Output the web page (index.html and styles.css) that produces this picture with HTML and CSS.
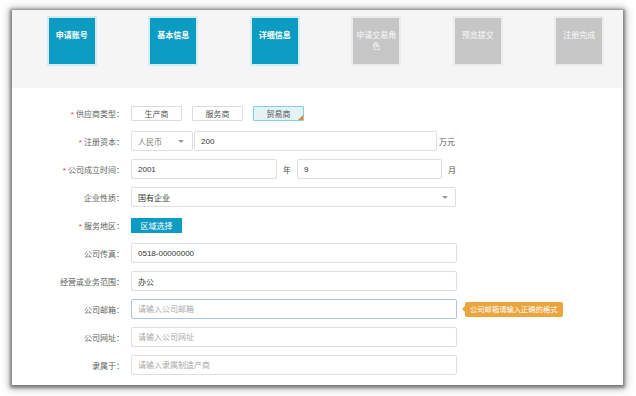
FILE: index.html
```html
<!DOCTYPE html>
<html>

<head>
    <title>注册 - 详细信息</title>
    <meta charset="utf-8">
    <meta name="viewport" content="width=device-width, initial-scale=1.0">
    <link rel="stylesheet" href="styles.css">
</head>

<body>
    <div class="panel">
        <nav class="steps">
            <div class="step"><div class="box done">申请账号</div></div>
            <div class="step"><div class="box done">基本信息</div></div>
            <div class="step"><div class="box done">详细信息</div></div>
            <div class="step"><div class="box">申请交易角色</div></div>
            <div class="step"><div class="box">预览提交</div></div>
            <div class="step"><div class="box">注册完成</div></div>
        </nav>

        <form class="form">
            <div class="row">
                <label class="lbl"><span class="req">*</span> 供应商类型：</label>
                <div class="field">
                    <button type="button" class="type">生产商</button>
                    <button type="button" class="type">服务商</button>
                    <button type="button" class="type valgt">贸易商</button>
                </div>
            </div>
            <div class="row">
                <label class="lbl"><span class="req">*</span> 注册资本：</label>
                <div class="field">
                    <div class="select small grey">人民币<span class="arrow"></span></div>
                    <input class="input money" type="text" value="200">
                    <span class="unit">万元</span>
                </div>
            </div>
            <div class="row">
                <label class="lbl"><span class="req">*</span> 公司成立时间：</label>
                <div class="field">
                    <input class="input year" type="text" value="2001">
                    <span class="unit wide">年</span>
                    <input class="input month" type="text" value="9">
                    <span class="unit wide">月</span>
                </div>
            </div>
            <div class="row">
                <label class="lbl">企业性质：</label>
                <div class="field">
                    <div class="select big">国有企业<span class="arrow"></span></div>
                </div>
            </div>
            <div class="row">
                <label class="lbl"><span class="req">*</span> 服务地区：</label>
                <div class="field">
                    <button type="button" class="area">区域选择</button>
                </div>
            </div>
            <div class="row">
                <label class="lbl">公司传真：</label>
                <div class="field"><input class="input full" type="text" value="0518-00000000"></div>
            </div>
            <div class="row">
                <label class="lbl">经营或业务范围：</label>
                <div class="field"><input class="input full" type="text" value="办公"></div>
            </div>
            <div class="row">
                <label class="lbl">公司邮箱：</label>
                <div class="field">
                    <input class="input full fokus" type="text" placeholder="请输入公司邮箱">
                    <span class="tip">公司邮箱请输入正确的格式</span>
                </div>
            </div>
            <div class="row">
                <label class="lbl">公司网址：</label>
                <div class="field"><input class="input full" type="text" placeholder="请输入公司网址"></div>
            </div>
            <div class="row">
                <label class="lbl">隶属于：</label>
                <div class="field"><input class="input full" type="text" placeholder="请输入隶属制造产商"></div>
            </div>
        </form>
    </div>
</body></html>
```

FILE: styles.css
```css
body {
    margin: 0;
    padding: 10px 13px 11px 12px;
    background: white;
    font-family: "Liberation Sans", "Noto Sans CJK SC", sans-serif;
}

.panel {
    height: 375px;
    background: white;
    overflow: hidden;
    box-shadow: 0 1px 3px 2px rgba(0, 0, 0, .4), 0 1px 8px 3px rgba(0, 0, 0, .25);
}

/* steps */

.steps {
    display: flex;
    height: 78px;
    box-sizing: border-box;
    padding: 6px 0 0 9px;
    background-color: #f5f5f5;
}

.step {
    flex: 0 0 101.5px;
    display: flex;
    justify-content: center;
}

.box {
    width: 42px;
    height: 34px;
    padding: 12px 2px 0;
    border: 2px solid #ececec;
    background-color: #c6c6c6;
    color: #fafafa;
    font-size: 8px;
    line-height: 11px;
    text-align: center;
}

.box.done {
    background-color: #0c9cc3;
    border-color: #d3ebf3;
    color: white;
    font-weight: bold;
}

/* form */

.form {
    padding-top: 11px;
}

.row {
    display: flex;
    align-items: center;
    height: 28px;
}

.lbl {
    flex: 0 0 112px;
    margin-right: 7px;
    text-align: right;
    font-size: 8px;
    color: #606060;
}

.req {
    color: #e4393c;
}

.field {
    display: flex;
    align-items: center;
}

.type {
    width: 51px;
    height: 15px;
    margin-right: 10px;
    padding: 0;
    border: 1px solid #dcdcdc;
    border-radius: 1px;
    background-color: white;
    color: #555;
    font-family: inherit;
    font-size: 8px;
}

.type.valgt {
    position: relative;
    background-color: #e4f1f5;
    border-color: #86cde2;
}

.type.valgt::after {
    content: "";
    position: absolute;
    right: 0;
    bottom: 0;
    border-bottom: 5px solid #e8832f;
    border-left: 5px solid transparent;
}

.area {
    width: 51px;
    height: 15px;
    padding: 0;
    border: none;
    background-color: #0c9cc3;
    color: white;
    font-family: inherit;
    font-size: 8px;
}

.input {
    height: 20px;
    box-sizing: border-box;
    padding: 0 6px;
    border: 1px solid #dedede;
    border-radius: 2px;
    color: #333;
    font-family: inherit;
    font-size: 8px;
    outline: none;
}

.input::placeholder {
    color: #aaa;
}

.input.fokus {
    border-color: #a9c5ef;
}

.money {
    width: 243px;
    margin-left: 1px;
}

.year {
    width: 146px;
}

.month {
    width: 145px;
}

.full {
    width: 326px;
}

.unit {
    margin-left: 2px;
    font-size: 8px;
    color: #555;
}

.unit.wide {
    margin: 0 6px;
}

.select {
    display: flex;
    justify-content: space-between;
    align-items: center;
    height: 20px;
    box-sizing: border-box;
    padding: 0 7px 0 6px;
    border: 1px solid #dedede;
    border-radius: 2px;
    font-size: 8px;
    color: #333;
}

.select.small {
    width: 62px;
    padding-right: 8px;
}

.select.big {
    width: 325px;
}

.select.grey {
    color: #777;
}

.arrow {
    border-top: 3px solid #999;
    border-left: 3.5px solid transparent;
    border-right: 3.5px solid transparent;
}

.tip {
    position: relative;
    margin-left: 8px;
    padding: 0 5px;
    height: 15px;
    line-height: 15px;
    border-radius: 2px;
    background-color: #eba53f;
    color: white;
    font-size: 7.3px;
}

.tip::before {
    content: "";
    position: absolute;
    left: -3px;
    top: 4px;
    border-right: 3px solid #eba53f;
    border-top: 3.5px solid transparent;
    border-bottom: 3.5px solid transparent;
}
```
